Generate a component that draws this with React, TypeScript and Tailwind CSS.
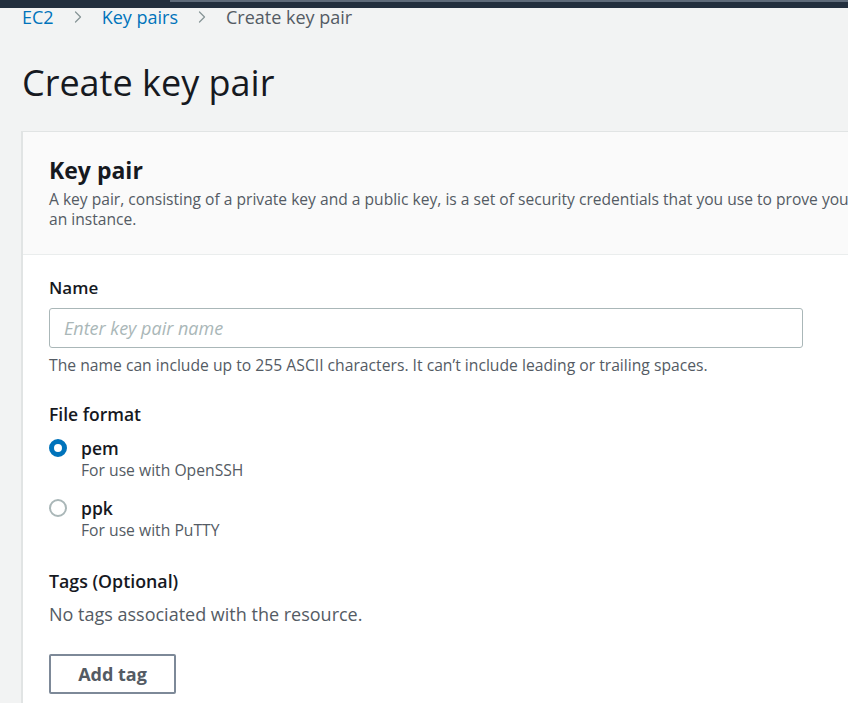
import { ChevronRight } from 'lucide-react';

export default function App() {
  return (
    <div className="min-h-screen bg-[#f2f3f3] text-[#16191f] overflow-hidden" style={{ fontFamily: '"Open Sans", sans-serif' }}>
      {/* Top bar */}
      <div className="h-[8px] bg-[#232f3e] relative">
        <div className="absolute left-[170px] right-0 top-0 h-[2px] bg-[#5f6b7a]" />
      </div>

      {/* Breadcrumb */}
      <nav className="flex items-center h-[20px] mt-[-1px] pl-[22px] text-[18px] leading-[20px]">
        <span className="text-[#0073bb]">EC2</span>
        <ChevronRight className="w-[20px] h-[20px] text-[#879596] mx-[14px]" strokeWidth={1.5} />
        <span className="text-[#0073bb]">Key pairs</span>
        <ChevronRight className="w-[20px] h-[20px] text-[#879596] mx-[14px]" strokeWidth={1.5} />
        <span className="text-[#545b64]">Create key pair</span>
      </nav>

      {/* Title */}
      <h1 className="pl-[22px] mt-[34px] text-[36px] leading-[44px] font-normal">Create key pair</h1>

      {/* Card */}
      <div className="ml-[21px] mt-[26px] w-[1100px] bg-white border-l-2 border-t border-b border-[#e1e4e4]">
        <div className="bg-[#fafafa] border-b border-[#eaeded] px-[26px] pt-[23px] pb-[25px]">
          <h2 className="text-[23px] leading-[30px] font-bold">Key pair</h2>
          <p className="text-[15.6px] leading-[20px] text-[#545b64] mt-[4px] w-[1018px]">
            A key pair, consisting of a private key and a public key, is a set of security credentials that you use to prove your identity when connecting to an instance.
          </p>
        </div>

        <div className="px-[26px] pt-[21px] pb-[12px]">
          <label className="block text-[17px] leading-[24px] font-semibold">Name</label>
          <div className="mt-[8px] w-[754px] h-[40px] border border-[#aab7b8] rounded-[3px] flex items-center px-[14px]">
            <span className="italic text-[#aab7b8] text-[18px]">Enter key pair name</span>
          </div>
          <p className="mt-[7px] text-[15.7px] leading-[20px] text-[#545b64]">
            The name can include up to 255 ASCII characters. It can’t include leading or trailing spaces.
          </p>

          <label className="block mt-[27px] text-[17.5px] leading-[24px] font-semibold">File format</label>
          <div className="mt-[11px] flex flex-col gap-[15px]">
            <div className="flex items-start">
              <div className="w-[18px] h-[18px] mt-[2px] rounded-full border-[5px] border-[#0073bb] bg-white" />
              <div className="ml-[14px]">
                <div className="text-[17.5px] leading-[22px] font-semibold">pem</div>
                <div className="text-[15.7px] leading-[23px] text-[#545b64]">For use with OpenSSH</div>
              </div>
            </div>
            <div className="flex items-start">
              <div className="w-[18px] h-[18px] mt-[2px] rounded-full border-2 border-[#aab7b8] bg-white" />
              <div className="ml-[14px]">
                <div className="text-[17.5px] leading-[22px] font-semibold">ppk</div>
                <div className="text-[15.7px] leading-[23px] text-[#545b64]">For use with PuTTY</div>
              </div>
            </div>
          </div>

          <label className="block mt-[27px] text-[17.8px] leading-[24px] font-semibold">Tags (Optional)</label>
          <p className="mt-[9px] text-[18px] leading-[24px] text-[#545b64]">No tags associated with the resource.</p>
          <button className="mt-[28px] w-[127px] h-[40px] border-2 border-[#7d8998] rounded-[2px] text-[18px] font-bold text-[#545b64] bg-white">
            Add tag
          </button>
        </div>
      </div>
    </div>
  );
}
